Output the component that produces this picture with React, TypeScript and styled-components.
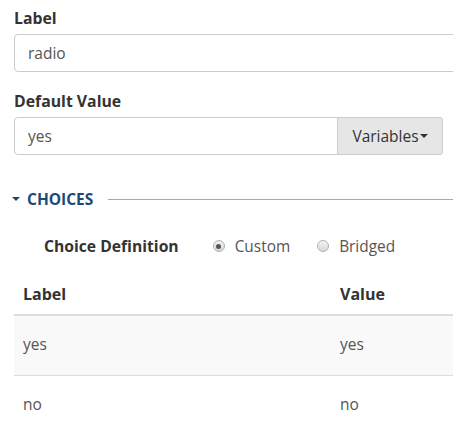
import React from "react";
import styled, { createGlobalStyle } from "styled-components";

const GlobalStyle = createGlobalStyle`
  body {
    margin: 0;
    font-family: "Open Sans", "Liberation Sans", sans-serif;
    color: #333;
    background: #fff;
    overflow: hidden;
  }
`;

const Page = styled.div`
  padding: 7px 0 0 14px;
  width: 470px;
  box-sizing: border-box;
`;

const FieldGroup = styled.div`
  margin-bottom: 18px;
`;

const FieldLabel = styled.label`
  display: block;
  font-size: 15.8px;
  font-weight: 700;
  line-height: 22px;
  margin-bottom: 5px;
  color: #333;
`;

const TextInput = styled.input`
  display: block;
  box-sizing: border-box;
  height: 38px;
  width: 100%;
  padding: 6px 13px;
  font-family: inherit;
  font-size: 15.5px;
  color: #555;
  border: 1px solid #ccc;
  border-radius: 4px;
  outline: none;
`;

const InputGroup = styled.div`
  display: flex;
  width: 429px;
`;

const GroupInput = styled(TextInput)`
  flex: 1;
  border-radius: 4px 0 0 4px;
`;

const AddonButton = styled.button`
  height: 38px;
  width: 105px;
  box-sizing: border-box;
  border: 1px solid #ccc;
  border-left: none;
  border-radius: 0 4px 4px 0;
  background: #e6e6e6;
  font-family: inherit;
  font-size: 15.5px;
  color: #333;
  display: flex;
  align-items: center;
  justify-content: center;
  gap: 1px;
  padding: 0;
`;

const Caret = styled.span<{ $size: number }>`
  display: inline-block;
  width: 0;
  height: 0;
  border-left: ${(p) => p.$size}px solid transparent;
  border-right: ${(p) => p.$size}px solid transparent;
  border-top: ${(p) => p.$size}px solid currentColor;
`;

const SectionHeader = styled.div`
  display: flex;
  align-items: center;
  margin: 33px 0 0 -2px;
  color: #1c4a75;
`;

const SectionTitle = styled.span`
  display: flex;
  align-items: center;
  gap: 7px;
  font-size: 15.5px;
  font-weight: 700;
  line-height: 22px;
`;

const SectionRule = styled.div`
  flex: 1;
  height: 1px;
  background: #98acbf;
  margin-left: 15px;
`;

const ChoiceRow = styled.div`
  display: flex;
  align-items: center;
  padding: 25px 0 0 30px;
  height: 22px;
`;

const ChoiceLabel = styled.span`
  font-size: 15.7px;
  font-weight: 700;
  color: #333;
  margin-right: 34px;
`;

const RadioOption = styled.label`
  display: flex;
  align-items: center;
  font-size: 15.4px;
  color: #555;
  margin-right: 27px;
`;

const RadioDot = styled.span<{ $checked?: boolean }>`
  width: 12px;
  height: 12px;
  box-sizing: border-box;
  border-radius: 50%;
  border: 1px solid #b0b0b0;
  background: linear-gradient(#f4f4f4, #d8d8d8);
  margin-right: 10px;
  display: flex;
  align-items: center;
  justify-content: center;

  &::after {
    content: "";
    width: 5px;
    height: 5px;
    border-radius: 50%;
    background: #555;
    display: ${(p) => (p.$checked ? "block" : "none")};
  }
`;

const Table = styled.table`
  margin-top: 24px;
  width: 445px;
  border-collapse: collapse;
  font-size: 15.5px;
  line-height: 22px;
`;

const HeadCell = styled.th<{ $width?: number }>`
  text-align: left;
  font-weight: 700;
  font-size: 16px;
  color: #333;
  padding: 2px 9px 9px;
  border-bottom: 2px solid #ddd;
  width: ${(p) => (p.$width ? `${p.$width}px` : "auto")};
`;

const Row = styled.tr<{ $striped?: boolean }>`
  background: ${(p) => (p.$striped ? "#f9f9f9" : "#fff")};
  border-bottom: 1px solid #ddd;
`;

const Cell = styled.td`
  padding: 17px 9px 20px;
  color: #555;
`;

const choices = [
  { label: "yes", value: "yes" },
  { label: "no", value: "no" },
];

export default function App() {
  return (
    <Page>
      <GlobalStyle />
      <FieldGroup>
        <FieldLabel>Label</FieldLabel>
        <TextInput defaultValue="radio" />
      </FieldGroup>
      <FieldGroup>
        <FieldLabel>Default Value</FieldLabel>
        <InputGroup>
          <GroupInput defaultValue="yes" />
          <AddonButton>
            Variables
            <Caret $size={4} />
          </AddonButton>
        </InputGroup>
      </FieldGroup>

      <SectionHeader>
        <SectionTitle>
          <Caret $size={4} />
          CHOICES
        </SectionTitle>
        <SectionRule />
      </SectionHeader>

      <ChoiceRow>
        <ChoiceLabel>Choice Definition</ChoiceLabel>
        <RadioOption>
          <RadioDot $checked />
          Custom
        </RadioOption>
        <RadioOption>
          <RadioDot />
          Bridged
        </RadioOption>
      </ChoiceRow>

      <Table>
        <thead>
          <tr>
            <HeadCell $width={299}>Label</HeadCell>
            <HeadCell>Value</HeadCell>
          </tr>
        </thead>
        <tbody>
          {choices.map((c, i) => (
            <Row key={c.label} $striped={i % 2 === 0}>
              <Cell>{c.label}</Cell>
              <Cell>{c.value}</Cell>
            </Row>
          ))}
        </tbody>
      </Table>
    </Page>
  );
}
